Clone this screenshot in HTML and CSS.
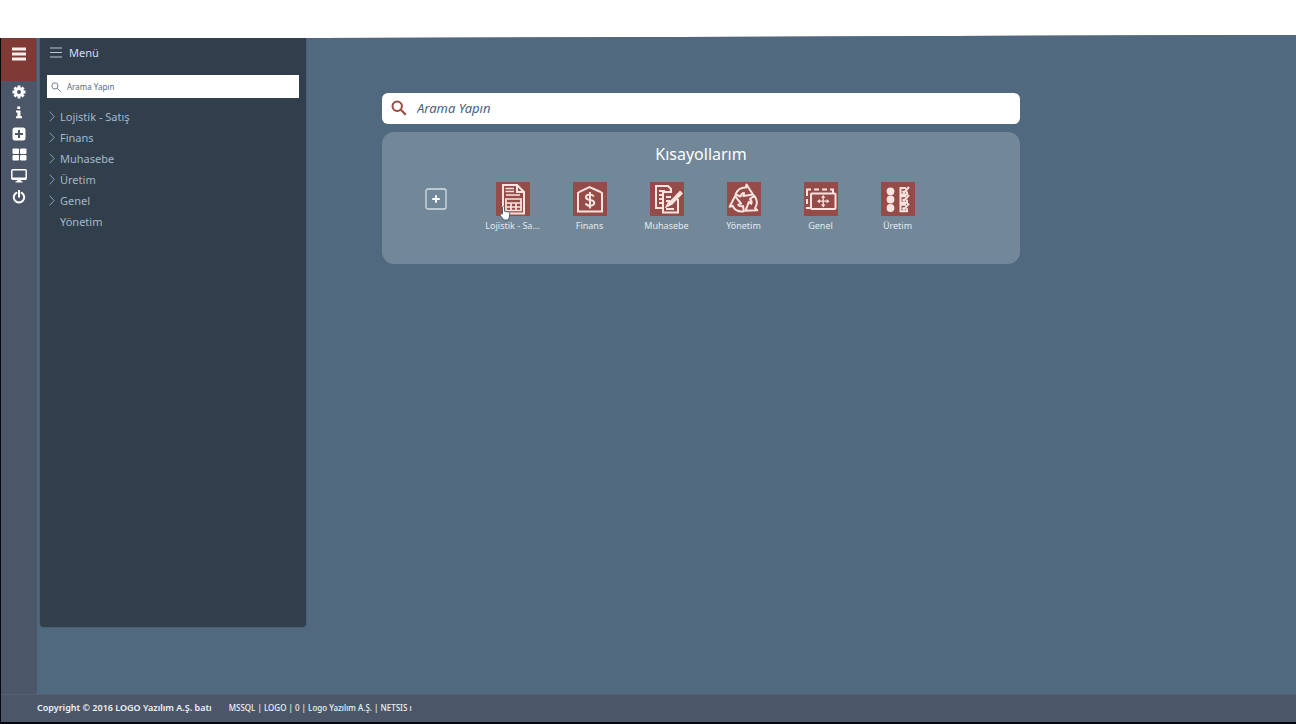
FILE: index.html
```html
<!DOCTYPE html>
<html lang="tr">
<head>
<meta charset="utf-8">
<title>Menü</title>
<link rel="stylesheet" href="styles.css">
</head>
<body>
<div class="app">
  <div class="workspace">
    <nav class="rail" aria-label="Araçlar">
      <button class="rail-toggle" aria-label="Menü"><svg width="16" height="14" viewBox="0 0 16 14"><path d="M1 2h14M1 7h14M1 12h14" stroke="#fbeeee" stroke-width="2.800"/></svg></button>
      <div class="rail-tools">
        <button aria-label="Ayarlar"><svg width="14" height="14" viewBox="0 0 14 14"><circle cx="7" cy="7" r="3.500" fill="none" stroke="#fff" stroke-width="3"/><path d="M7 .5v2M7 11.500v2M.5 7h2M11.500 7h2M2.400 2.400l1.500 1.500M10.100 10.100l1.500 1.500M2.400 11.600l1.500-1.500M10.100 3.900l1.500-1.500" stroke="#fff" stroke-width="2.800"/></svg></button>
        <button aria-label="Bilgi"><svg width="8" height="13" viewBox="0 0 8 13"><path fill="#fff" d="M2.200.5h3v2.600h-3zM1 4.500h4.500v5.800H7v2H1v-2h1.400V6.500H1z"/></svg></button>
        <button aria-label="Ekle"><svg width="14" height="14" viewBox="0 0 14 14"><rect x=".5" y=".5" width="13" height="13" rx="2.500" fill="#fff"/><path d="M7 3v8M3 7h8" stroke="#4b5768" stroke-width="2"/></svg></button>
        <button aria-label="Pencereler"><svg width="15" height="13" viewBox="0 0 15 13"><g fill="#fff"><rect x=".5" y=".5" width="6.500" height="5.500" rx="1"/><rect x="8" y=".5" width="6.500" height="5.500" rx="1"/><rect x=".5" y="7" width="6.500" height="5.500" rx="1"/><rect x="8" y="7" width="6.500" height="5.500" rx="1"/></g></svg></button>
        <button aria-label="Ekran"><svg width="16" height="14" viewBox="0 0 16 14"><rect x=".8" y=".8" width="14.400" height="9.400" rx="1" fill="none" stroke="#fff" stroke-width="1.500"/><path d="M1 8.500h14v2H1zM6 10h4v2.200h1.500v1.300h-7v-1.300H6z" fill="#fff"/></svg></button>
        <button aria-label="Çıkış"><svg width="14" height="14" viewBox="0 0 14 14"><path d="M4.300 2.800a5.200 5.200 0 1 0 5.400 0M7 .8v6" fill="none" stroke="#fff" stroke-width="2" stroke-linecap="round"/></svg></button>
      </div>
    </nav>
    <main class="main">
      <aside class="menu">
        <h2 class="menu-title"><svg width="12" height="11" viewBox="0 0 12 11"><path d="M0 1h12M0 5.500h12M0 10h12" stroke="#b9c6d2"/></svg>Menü</h2>
        <label class="menu-search"><svg width="10" height="10" viewBox="0 0 10 10"><path d="M6.300 6.300 9.500 9.500" stroke="#6f8192"/><circle cx="3.900" cy="3.900" r="3.100" fill="none" stroke="#6f8192"/></svg><input type="text" placeholder="Arama Yapın" aria-label="Menüde ara"></label>
        <ul class="tree">
          <li><a href="#"><svg class="chevron" viewBox="0 0 6 11"><path d="m.6.7 4.600 4.800L.6 10.300"/></svg>Lojistik - Satış</a></li>
          <li><a href="#"><svg class="chevron" viewBox="0 0 6 11"><path d="m.6.7 4.600 4.800L.6 10.300"/></svg>Finans</a></li>
          <li><a href="#"><svg class="chevron" viewBox="0 0 6 11"><path d="m.6.7 4.600 4.800L.6 10.300"/></svg>Muhasebe</a></li>
          <li><a href="#"><svg class="chevron" viewBox="0 0 6 11"><path d="m.6.7 4.600 4.800L.6 10.300"/></svg>Üretim</a></li>
          <li><a href="#"><svg class="chevron" viewBox="0 0 6 11"><path d="m.6.7 4.600 4.800L.6 10.300"/></svg>Genel</a></li>
          <li><a href="#"><svg class="chevron" viewBox="0 0 6 11"></svg>Yönetim</a></li>
        </ul>
      </aside>
      <div class="content">
        <label class="search"><svg width="16" height="16" viewBox="0 0 16 16"><circle cx="6.200" cy="6.200" r="4.700" fill="none" stroke="#9c4843" stroke-width="2"/><path d="m9.800 9.800 5 5" stroke="#9c4843" stroke-width="2.200"/></svg><input type="text" placeholder="Arama Yapın" aria-label="Arama"></label>
        <section class="shortcuts">
          <h1 class="shortcuts-title">Kısayollarım</h1>
          <div class="shortcut-grid">
            <button class="shortcut" aria-label="Kısayol ekle"><span class="tile tile-add"><svg width="22" height="22" viewBox="0 0 22 22"><rect x="1" y="1" width="20" height="20" rx="2" fill="none" stroke="#d5dee5" stroke-width="1.300"/><path d="M11 7.200v7.600M7.200 11h7.600" stroke="#fff" stroke-width="1.800"/></svg></span></button>
            <button class="shortcut"><span class="tile"><svg viewBox="0 0 34 34"><path d="M7 17V3h14l7 7v21.500H7V17M21 3v7h7"/><path d="M9.500 6.500H18M9.500 9.500H18M10 13h14" stroke-width="1.400"/><path d="M10 17h15v11.500H10zM10 21h15M10 25h15M15 21v7.500M20 21v7.500" stroke-width="1.700"/></svg><svg class="pointer" viewBox="0 0 12 16"><path d="M3.500 9V2.200q1-1.600 2 0v4l4.200.9q1.300.5 1.100 2l-.6 3.400-1 2.500H5L1.200 10.300q-.2-1.500 1-1.300z"/></svg></span>Lojistik - Sa...</button>
            <button class="shortcut"><span class="tile"><svg viewBox="0 0 34 34"><path d="M5 29.500V11l2-1.500L16.500 5l10 4.500L29 11v18.500z"/><path d="M20.800 14.500q-1-2-3.800-2-4 0-4 2.700 0 2.200 4 2.800 4.200.6 4.200 3t-4.200 2.800q-3.500 0-4.300-2.400M17 10v16.500"/></svg></span>Finans</button>
            <button class="shortcut"><span class="tile"><svg viewBox="0 0 34 34"><path d="M12 26H6V4h12l3 3v3M9 9h6M9 13h3M9 17h3M9 21h3"/><path d="M22 10h-9v20.500h15V17M16 15h5M16 19h3M16 27h8"/><path d="M31.500 10 21 21" stroke-width="4"/><path d="m19.500 18-4 7.500 7-3.500z" fill="#fbe4df" stroke-width="1"/></svg></span>Muhasebe</button>
            <button class="shortcut"><span class="tile"><svg viewBox="0 0 34 34" stroke-width="2" stroke-linejoin="round"><path id="arrow" d="M8.500 12.500Q11.500 5 19 5.500l.5-3 6.500 10-9.500 1.500.5-3q-2.500 0-3.500 3.500z"/><use href="#arrow" transform="rotate(120 17.500 18.500)"/><use href="#arrow" transform="rotate(240 17.500 18.500)"/></svg></span>Yönetim</button>
            <button class="shortcut"><span class="tile"><svg viewBox="0 0 34 34"><path d="M3 14V7.500h4M10 7.500h5M18 7.500h5M26 7.500h3V11M3 17v5M3 25v1h3"/><rect x="7" y="11.500" width="24.500" height="15.500" rx="1"/><path d="M19.200 14.500v9.500M14.200 19.200h10" stroke-width="1.300"/><path d="M19.200 13l2.200 2.800H17zM19.200 25.400l2.200-2.800H17zM13 19.200l2.800-2.200v4.400zM25.400 19.200l-2.800-2.200v4.400z" fill="#fbe4df" stroke="none"/></svg></span>Genel</button>
            <button class="shortcut"><span class="tile"><svg viewBox="0 0 34 34"><g fill="#fbe4df" stroke="none"><circle cx="9.500" cy="9.300" r="3.900"/><circle cx="9.500" cy="17.500" r="3.900"/><circle cx="9.500" cy="26" r="3.900"/></g><path d="M25 6h-5.500v6.500H26v-3M21.500 9l1.500 1.500L28 5M25 14.200h-5.500v6.500H26v-3M21.500 17.200l1.500 1.500 5-5.500M25 22.700h-5.500v6.500H26v-3M21.500 25.700l1.500 1.500 5-5.500"/></svg></span>Üretim</button>
          </div>
        </section>
      </div>
    </main>
  </div>
  <footer class="footer"><span class="copyright">Copyright © 2016 LOGO Yazılım A.Ş. batı</span><span class="session">MSSQL | LOGO | 0 | Logo Yazılım A.Ş. | NETSIS ı</span></footer>
</div>
</body>
</html>
```
FILE: styles.css
```css
* { box-sizing: border-box; }

body {
  margin: 0;
  min-height: 100vh;
  padding-top: 35px;
  display: flex;
  flex-direction: column;
  background: #fff;
  font-family: "Noto Sans", "Open Sans", sans-serif;
}

button {
  border: 0;
  padding: 0;
  background: none;
  color: inherit;
  font: inherit;
  cursor: pointer;
}

input {
  flex: 1;
  min-width: 0;
  border: 0;
  padding: 0;
  outline: 0;
  background: none;
  font: inherit;
  color: inherit;
}

input::placeholder { color: inherit; opacity: 1; }

svg { display: block; fill: none; flex: none; }

.app {
  flex: 1;
  display: flex;
  flex-direction: column;
  border-left: 1px solid #05070c;
  border-bottom: 2px solid #05050f;
  background: #4b5768;
  clip-path: polygon(0 3px, 320px 3px, 100% 0, 100% 100%, 0 100%);
}

.workspace { flex: 1; display: flex; }

.rail { width: 36px; }

.rail-toggle {
  width: 35px;
  height: 46px;
  padding: 4px 0 12px;
  display: grid;
  place-items: center;
  background: #803a35;
}

.rail-tools { display: grid; grid-auto-rows: 21px; }

.rail-tools button { display: grid; place-items: center; }

.main {
  flex: 1;
  display: flex;
  padding: 3px 0 0 3px;
  background: #50697f;
}

.menu {
  width: 266px;
  margin-bottom: 67px;
  padding: 0 7px;
  border-radius: 0 0 4px 4px;
  background: #313f4d;
  box-shadow: 0 0 2px #3c4d5c;
}

.menu-title {
  margin: 0 0 8px;
  padding-left: 3px;
  height: 29px;
  display: flex;
  align-items: center;
  gap: 7px;
  font-size: 11px;
  font-weight: 400;
  color: #d6dfe7;
}

.menu-search {
  height: 23px;
  padding: 0 4px;
  display: flex;
  align-items: center;
  gap: 6px;
  background: #fff;
  color: #596a7b;
  font-size: 8px;
}

.tree {
  margin: 8px 0 0;
  padding: 0 0 0 2px;
  list-style: none;
  font-size: 11px;
}

.tree a {
  height: 21px;
  display: flex;
  align-items: center;
  gap: 5px;
  color: #a5b8c8;
  text-decoration: none;
}

.chevron { width: 6px; height: 11px; stroke: #8fa3b4; }

.content { flex: 1; padding: 55px 276px 0 76px; }

.search {
  height: 31px;
  padding: 0 9px 1px;
  display: flex;
  align-items: center;
  gap: 10px;
  border-radius: 6px;
  background: #fff;
  color: #48627b;
  font-size: 13px;
  font-style: italic;
}

.shortcuts {
  margin-top: 8px;
  padding: 11px 15px 32px;
  border-radius: 12px;
  background: #728798;
  color: #fff;
}

.shortcuts-title {
  margin: 0 0 17px;
  font-size: 16px;
  line-height: 22px;
  font-weight: 400;
  text-align: center;
}

.shortcut-grid {
  display: grid;
  grid-template-columns: repeat(auto-fill, 77px);
}

.shortcut {
  height: 50px;
  display: flex;
  flex-direction: column;
  align-items: center;
  gap: 3px;
  font-size: 9px;
  line-height: 13px;
  color: #e4eaef;
}

.tile {
  position: relative;
  width: 34px;
  height: 34px;
  display: grid;
  place-items: center;
  background: #954c49;
  stroke: #fbe4df;
  stroke-width: 2;
}

.tile-add { background: none; }

.pointer {
  position: absolute;
  left: 3px;
  top: 23px;
  width: 12px;
  height: 16px;
  fill: #fff;
  stroke: #53606d;
  stroke-width: 1;
}

.footer {
  height: 28px;
  padding: 0 0 3px 36px;
  display: flex;
  align-items: center;
  gap: 17px;
  border-top: 1px solid #556371;
  color: #eef2f6;
}

.copyright { font-size: 9px; font-weight: 600; }

.session { font-size: 8px; font-weight: 500; }
```
